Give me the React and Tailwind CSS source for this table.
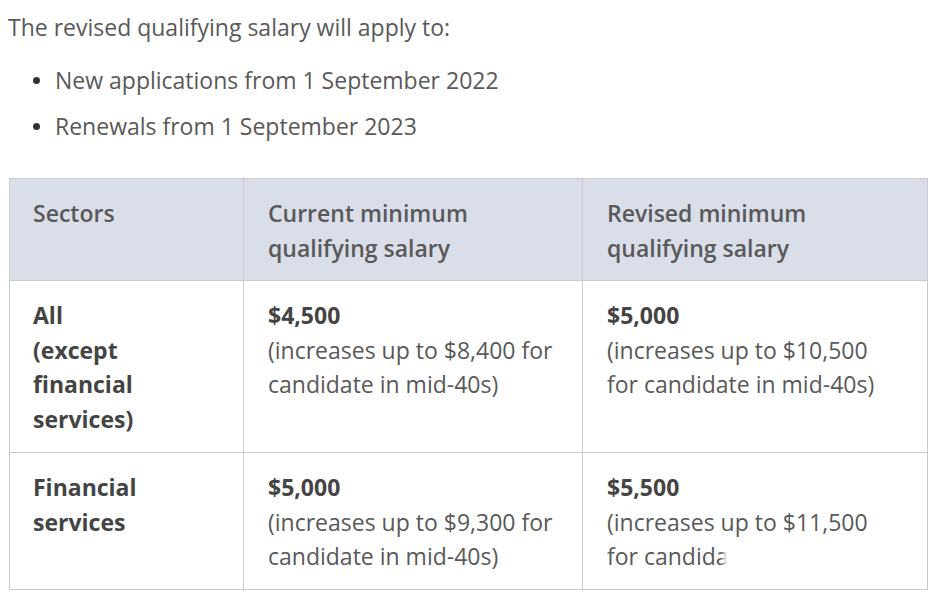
export default function App() {
  const font = { fontFamily: '"Open Sans", sans-serif' };
  return (
    <div className="w-[937px] h-[595px] bg-white overflow-hidden text-[#595959]" style={font}>
      <p className="pl-[8px] pt-[12px] text-[23px] leading-[30px]">The revised qualifying salary will apply to:</p>
      <ul className="mt-[23px] pl-[55px] text-[23px] leading-[30px]">
        <li className="relative">
          <span className="absolute left-[-22px] top-[12px] w-[7px] h-[7px] rounded-full bg-[#333]"></span>
          New applications from 1 September 2022
        </li>
        <li className="relative mt-[16px]">
          <span className="absolute left-[-22px] top-[12px] w-[7px] h-[7px] rounded-full bg-[#333]"></span>
          Renewals from 1 September 2023
        </li>
      </ul>
      <div className="mt-[37px] ml-[9px] w-[919px] border border-[#c9cbcf] text-[23px] leading-[34.5px]">
        <div className="grid grid-cols-[233px_339px_1fr] bg-[#d9dee8] border-b border-[#c9cbcf] h-[102px]">
          <div className="px-[23px] py-[17px] font-semibold">Sectors</div>
          <div className="px-[24px] py-[17px] font-semibold border-l border-[#c9cbcf]">Current minimum<br />qualifying salary</div>
          <div className="px-[24px] py-[17px] font-semibold border-l border-[#c9cbcf]">Revised minimum<br />qualifying salary</div>
        </div>
        <div className="grid grid-cols-[233px_339px_1fr] border-b border-[#c9cbcf] h-[172px]">
          <div className="px-[23px] py-[17px] font-bold text-[#444]">All<br />(except<br />financial<br />services)</div>
          <div className="px-[24px] py-[17px] border-l border-[#c9cbcf]"><span className="font-bold text-[#444]">$4,500</span><br />(increases up to $8,400 for<br />candidate in mid-40s)</div>
          <div className="px-[24px] py-[17px] border-l border-[#c9cbcf]"><span className="font-bold text-[#444]">$5,000</span><br />(increases up to $10,500<br />for candidate in mid-40s)</div>
        </div>
        <div className="grid grid-cols-[233px_339px_1fr] h-[136px]">
          <div className="px-[23px] py-[17px] font-bold text-[#444]">Financial<br />services</div>
          <div className="px-[24px] py-[17px] border-l border-[#c9cbcf]"><span className="font-bold text-[#444]">$5,000</span><br />(increases up to $9,300 for<br />candidate in mid-40s)</div>
          <div className="relative px-[24px] py-[17px] border-l border-[#c9cbcf]"><span className="font-bold text-[#444]">$5,500</span><br />(increases up to $11,500<br />for candidate in mid-40s)
            <div className="absolute left-[141px] top-[88px] w-[195px] h-[40px] bg-white blur-[2px]"></div>
          </div>
        </div>
      </div>
    </div>
  );
}
